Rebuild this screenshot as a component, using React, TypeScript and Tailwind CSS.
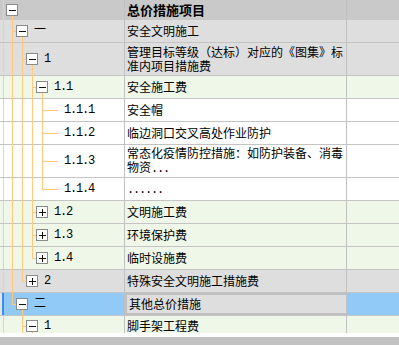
import type { ReactNode } from "react";

type Tone = "head" | "gray" | "green" | "white";

type Row = {
  level: number;
  code: string;
  name: ReactNode;
  tone: Tone;
  h: number;
  pass?: number[];
  last?: boolean;
  open?: boolean;
  closed?: boolean;
  selected?: boolean;
};

const LINE = "#ffc87c";

const rows: Row[] = [
  { level: 0, code: "", name: "总价措施项目", tone: "head", h: 20, open: true },
  { level: 1, code: "一", name: "安全文明施工", tone: "gray", h: 23, open: true },
  {
    level: 2,
    code: "1",
    name: (
      <>
        管理目标等级（达标）对应的《图集》标
        <br />
        准内项目措施费
      </>
    ),
    tone: "gray",
    h: 33,
    pass: [12],
    open: true,
  },
  { level: 3, code: "1.1", name: "安全施工费", tone: "green", h: 23, pass: [12, 22], open: true },
  { level: 4, code: "1.1.1", name: "安全帽", tone: "white", h: 23, pass: [12, 22, 32] },
  { level: 4, code: "1.1.2", name: "临边洞口交叉高处作业防护", tone: "white", h: 23, pass: [12, 22, 32] },
  {
    level: 4,
    code: "1.1.3",
    name: (
      <>
        常态化疫情防控措施：如防护装备、消毒
        <br />
        物资<span className="font-['Liberation_Mono',monospace] tracking-[-1.2px]">...</span>
      </>
    ),
    tone: "white",
    h: 33,
    pass: [12, 22, 32],
  },
  {
    level: 4,
    code: "1.1.4",
    name: <span className="font-['Liberation_Mono',monospace] tracking-[-1.2px]">......</span>,
    tone: "white",
    h: 23,
    pass: [12, 22, 32],
    last: true,
  },
  { level: 3, code: "1.2", name: "文明施工费", tone: "green", h: 23, pass: [12, 22], closed: true },
  { level: 3, code: "1.3", name: "环境保护费", tone: "green", h: 23, pass: [12, 22], closed: true },
  { level: 3, code: "1.4", name: "临时设施费", tone: "green", h: 23, pass: [12, 22], closed: true, last: true },
  { level: 2, code: "2", name: "特殊安全文明施工措施费", tone: "gray", h: 23, pass: [12], closed: true, last: true },
  { level: 1, code: "二", name: "其他总价措施", tone: "gray", h: 23, open: true, last: true, selected: true },
  { level: 2, code: "1", name: "脚手架工程费", tone: "green", h: 21, open: true },
];

const toneBg: Record<Tone, string> = {
  head: "bg-[#c9c9c9]",
  gray: "bg-[#dedede]",
  green: "bg-[#eef7e8]",
  white: "bg-white",
};

const indent: Record<number, string> = {
  0: "pl-[2px]",
  1: "pl-[12px]",
  2: "pl-[22px]",
  3: "pl-[32px]",
  4: "pl-[60px]",
};

const heights: Record<number, string> = {
  20: "h-[20px]",
  21: "h-[21px]",
  23: "h-[23px]",
  33: "h-[33px]",
};

function ToggleBox({ open }: { open: boolean }) {
  return (
    <svg width="12" height="12" viewBox="0 0 12 12" className="shrink-0" shapeRendering="crispEdges">
      <rect x="0.5" y="0.5" width="11" height="11" fill="#fff" stroke="#8a8a8a" />
      <line x1="3" y1="6.5" x2="10" y2="6.5" stroke="#111" />
      {!open && <line x1="6.5" y1="3" x2="6.5" y2="10" stroke="#111" />}
    </svg>
  );
}

// connector lines, coords relative to the tree cell (page x - 4)
function Guides({ row }: { row: Row }) {
  const { level, h } = row;
  const mid = Math.floor(h / 2);
  const boxTop = Math.floor((h - 12) / 2);
  const own = 8 + 10 * (level - 1);
  const leaf = !row.open && !row.closed;
  return (
    <svg
      width="121"
      height={h}
      className="pointer-events-none absolute left-0 top-0"
      shapeRendering="crispEdges"
    >
      {(row.pass ?? []).map((x) => (
        <line key={x} x1={x - 4 + 0.5} y1={0} x2={x - 4 + 0.5} y2={h} stroke={LINE} />
      ))}
      {level > 0 && (
        <>
          <line x1={own + 0.5} y1={0} x2={own + 0.5} y2={row.last ? mid + 1 : h} stroke={LINE} />
          <line
            x1={own}
            y1={mid + 0.5}
            x2={leaf ? own + 16 : own + 4}
            y2={mid + 0.5}
            stroke={LINE}
          />
        </>
      )}
      {row.open && (
        <line
          x1={own + 10 + 0.5}
          y1={boxTop + 12}
          x2={own + 10 + 0.5}
          y2={h}
          stroke={LINE}
        />
      )}
    </svg>
  );
}

function TreeRow({ row }: { row: Row }) {
  const head = row.tone === "head";
  const bg = row.selected ? "bg-[#91c9f7]" : toneBg[row.tone];
  const leaf = !row.open && !row.closed;
  return (
    <div className={`flex shrink-0 ${heights[row.h]} ${head ? "" : "border-b border-[#c4c4c4]"}`}>
      {row.selected ? (
        <div className="flex w-[4px] shrink-0">
          <div className="w-[2px] bg-[#e4e4e4]" />
          <div className="w-[2px] bg-[#3a8ef0]" />
        </div>
      ) : (
        <div className={`w-[4px] shrink-0 border-r border-[#d6d6d6] ${bg}`} />
      )}
      <div
        className={`relative flex w-[121px] shrink-0 items-center gap-[6px] border-r border-[#c0c0c0] ${bg} ${indent[row.level]}`}
      >
        <Guides row={row} />
        {!leaf && <ToggleBox open={!!row.open} />}
        {row.code && (
          <span className="relative text-[12px] leading-none tracking-[-1.2px] text-black font-['Liberation_Mono','Noto_Sans_CJK_SC',monospace]">
            {row.code}
          </span>
        )}
      </div>
      <div
        className={`flex w-[222px] shrink-0 items-center border-r border-[#c0c0c0] pl-[2px] text-black ${
          row.selected ? "border-2 border-[#7a7a7a] bg-[#dedede] pl-[1px]" : toneBg[row.tone]
        } ${head ? "text-[13px] font-bold" : "text-[12px] leading-[14px]"}`}
      >
        <span>{row.name}</span>
      </div>
      <div className={`flex-1 ${bg}`} />
    </div>
  );
}

export default function App() {
  return (
    <div className="flex h-[345px] w-[399px] flex-col overflow-hidden bg-white font-['Noto_Sans_CJK_SC',sans-serif]">
      <div className="flex h-[333px] shrink-0 flex-col overflow-hidden">
        {rows.map((r, i) => (
          <TreeRow key={i} row={r} />
        ))}
      </div>
      <div className="h-[4px] shrink-0 bg-white" />
      <div className="flex-1 bg-[#c2c2c2]" />
    </div>
  );
}
